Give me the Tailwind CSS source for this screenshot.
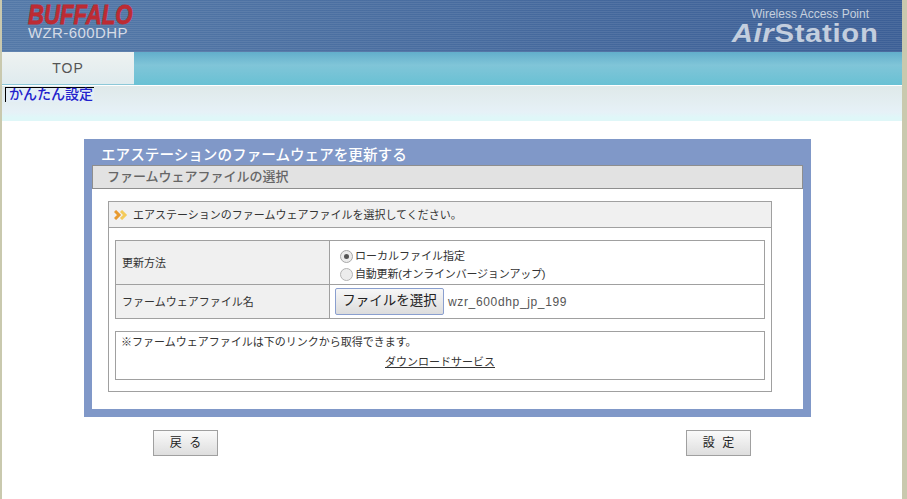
<!DOCTYPE html>
<html lang="ja">
<head>
    <meta charset="UTF-8">
    <title>AirStation</title>
    <script src="https://cdn.jsdelivr.net/npm/@tailwindcss/browser@4"></script>
</head>
<body class="bg-[#c9c9ae] h-[499px] overflow-hidden font-['Liberation_Sans','Noto_Sans_CJK_JP',sans-serif]">
    <div class="ml-[2px] w-[900px] h-[499px] bg-white">
        <!-- Header -->
        <div class="h-[52px] pl-[26px] pr-[24px] flex justify-between bg-[repeating-linear-gradient(0deg,#ffffff14_0,#ffffff14_1px,#0000_1px,#0000_2px),linear-gradient(90deg,#5479a8,#3c5f96)]">
            <div>
                <div class="text-[27px] leading-[31px] h-[25px] font-bold italic text-[#bd2b33] [-webkit-text-stroke:0.8px_#bd2b33] scale-x-[0.82] origin-left">BUFFALO</div>
                <div class="text-[15px] leading-[16px] text-[#d5dbe6] tracking-[0.4px]">WZR-600DHP</div>
            </div>
            <div class="flex flex-col items-end pt-[7px]">
                <div class="text-[12px] leading-[14px] pr-[9px] text-[#c5d0de]">Wireless Access Point</div>
                <div class="text-[25px] leading-[25px] font-bold text-[#c3cede] tracking-[0.6px] scale-x-[1.17] origin-right"><span class="italic">Air</span>Station</div>
            </div>
        </div>
        <!-- Tab bar -->
        <div class="h-[33px] bg-[linear-gradient(180deg,#62aecb_0,#80c5d8_40%,#69c1d4_100%)]">
            <div class="w-[132px] h-[33px] flex items-center justify-center bg-[linear-gradient(180deg,#eef2f1,#dfebee)] border-b border-[#8cc8d8] text-[14px] text-[#555] tracking-[1px]">TOP</div>
        </div>
        <!-- Sub menu -->
        <div class="h-[36px] border-t border-white bg-[linear-gradient(180deg,#dfe9e9_0,#e6f1f7_75%,#dff7f8_90%)] pl-[3px] flex items-start">
            <a class="h-[15px] mt-[1px] pl-[3px] pr-[1px] border-l border-t border-black text-[14px] leading-[13px] font-medium text-[#2222cc] bg-[#e3eef6]">かんたん設定</a>
        </div>

        <!-- Main panel -->
        <div class="ml-[82px] mt-[18px] w-[727px] h-[278px] bg-[#8098c8] px-[8px] pb-[8px] flex flex-col">
            <div class="h-[26px] pl-[9px] pt-[7px] text-[14.6px] leading-[19px] font-medium text-white">エアステーションのファームウェアを更新する</div>
            <div class="flex-1 bg-white">
                <div class="h-[24px] bg-[#e2e2e2] border border-[#8e8e8e] pl-[14px] text-[13px] leading-[22px] font-medium text-[#666]">ファームウェアファイルの選択</div>
                <div class="mt-[12px] ml-[16px] w-[664px] h-[191px] border border-[#a0a0a0]">
                    <div class="h-[26px] bg-[#f0f0f0] border-b border-[#a0a0a0] pl-[5px] pt-[1px] flex items-center gap-[5px] text-[11px] text-[#333]">
                        <svg width="14" height="10" viewBox="0 0 14 10" fill="none" stroke-width="3">
                            <path d="M1 1l4 4-4 4" stroke="#e89a2e"/>
                            <path d="M7 1l4 4-4 4" stroke="#f4cb5a"/>
                        </svg>
                        <span>エアステーションのファームウェアファイルを選択してください。</span>
                    </div>
                    <!-- Settings table -->
                    <div class="mt-[12px] ml-[6px] w-[650px] h-[79px] border border-[#a0a0a0] text-[11px] text-[#333]">
                        <div class="flex h-[44px] border-b border-[#a0a0a0]">
                            <div class="w-[214px] bg-[#f0f0f0] border-r border-[#a0a0a0] pl-[6px] pt-[2px] flex items-center">更新方法</div>
                            <div class="pl-[10px] pt-[7px]">
                                <div class="flex items-center h-[16px]">
                                    <span class="w-[13px] h-[13px] rounded-full border border-[#a8a8a8] bg-[#ececec] flex items-center justify-center mr-[2px]"><span class="w-[5px] h-[5px] rounded-full bg-[#555]"></span></span>
                                    ローカルファイル指定
                                </div>
                                <div class="flex items-center h-[16px] mt-[2px] tracking-[-0.2px]">
                                    <span class="w-[13px] h-[13px] rounded-full border border-[#b4b4b4] bg-[#ececec] mr-[2px]"></span>
                                    自動更新(オンラインバージョンアップ)
                                </div>
                            </div>
                        </div>
                        <div class="flex h-[33px]">
                            <div class="w-[214px] bg-[#f0f0f0] border-r border-[#a0a0a0] pl-[6px] pt-[1px] flex items-center">ファームウェアファイル名</div>
                            <div class="pl-[5px] flex items-center">
                                <span class="w-[109px] h-[27px] mr-[4px] flex items-center justify-center rounded-[2px] border border-[#8a9fcf] bg-[linear-gradient(180deg,#f7f7f7,#dcdcdc)] text-[13.5px] text-[#222]">ファイルを選択</span>
                                <span class="text-[12px] text-[#555] tracking-[0.65px]">wzr_600dhp_jp_199</span>
                            </div>
                        </div>
                    </div>
                    <!-- Download note -->
                    <div class="mt-[12px] ml-[6px] w-[650px] h-[49px] border border-[#a0a0a0] pl-[5px] text-[11px] text-[#333] leading-[18px] pt-[1px]">
                        <div>※ファームウェアファイルは下のリンクから取得できます。</div>
                        <div class="text-center pr-[5px] mt-[2px]"><a class="underline">ダウンロードサービス</a></div>
                    </div>
                </div>
            </div>
        </div>

        <!-- Buttons -->
        <div class="ml-[151px] mt-[13px] w-[598px] flex justify-between">
            <span class="w-[65px] h-[26px] flex items-center justify-center border border-[#a0a0a0] bg-[linear-gradient(180deg,#fafafa,#dedede)] text-[12px] text-[#222] [word-spacing:4px]">戻 る</span>
            <span class="w-[65px] h-[26px] flex items-center justify-center border border-[#a0a0a0] bg-[linear-gradient(180deg,#fafafa,#dedede)] text-[12px] text-[#222] [word-spacing:4px]">設 定</span>
        </div>
    </div>
</body>
</html>
